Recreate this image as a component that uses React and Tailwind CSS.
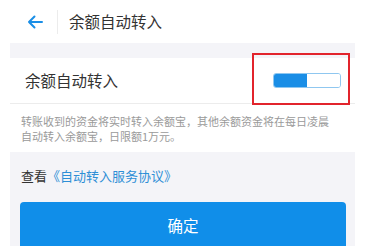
export default function App() {
  return (
    <div
      className="w-[373px] h-[246px] bg-white overflow-hidden"
      style={{ fontFamily: '"Noto Sans CJK SC", "Noto Sans", sans-serif' }}
    >
      <div className="ml-[10px] w-[345px]">
        {/* Header */}
        <div className="h-[43px] flex items-center bg-white">
          <div className="w-[47px] pl-[17px] flex items-center">
            <svg width="16" height="14" viewBox="0 0 16 14" fill="none">
              <path
                d="M15 7H2M7.5 1.5L2 7l5.5 5.5"
                stroke="#1a8ee6"
                strokeWidth="2"
                strokeLinecap="round"
                strokeLinejoin="round"
              />
            </svg>
          </div>
          <div className="w-px h-[24px] bg-[#ececec]" />
          <span className="ml-[11px] text-[15.5px] text-[#333] leading-none">余额自动转入</span>
        </div>

        <div className="h-[15px] bg-[#f4f4f8]" />

        {/* Switch row */}
        <div className="relative h-[46px] flex items-center justify-between border-b border-[#ececec] bg-white">
          <span className="ml-[15px] text-[15.5px] text-[#333] leading-none">余额自动转入</span>
          <div className="mr-[14px] flex w-[68px] h-[15px] rounded-[3px] border border-[#8fc7f0] overflow-hidden">
            <div className="w-1/2 bg-[#1a8ee6]" />
            <div className="w-1/2 bg-white" />
          </div>
          <div className="absolute left-[242px] top-[-5px] w-[98px] h-[52px] border-2 border-[#e2242c]" />
        </div>

        {/* Description */}
        <div className="bg-white pt-[10px] pb-[8px] pl-[11px] text-[11px] leading-[15px] text-[#9a9a9a]">
          <p className="whitespace-nowrap">转账收到的资金将实时转入余额宝，其他余额资金将在每日凌晨</p>
          <p className="whitespace-nowrap">自动转入余额宝，日限额1万元。</p>
        </div>

        {/* Agreement + button */}
        <div className="bg-[#f4f4f8] pt-[15px] px-[10px]">
          <p className="pl-[1px] text-[13px] leading-[18px] text-[#333]">
            查看<span className="text-[#2e8fd6]">《自动转入服务协议》</span>
          </p>
          <button className="mt-[17px] w-[326px] h-[48px] rounded-[4px] bg-[#108ee9] text-white text-[15.5px] flex items-center justify-center">
            确定
          </button>
        </div>
      </div>
    </div>
  );
}
